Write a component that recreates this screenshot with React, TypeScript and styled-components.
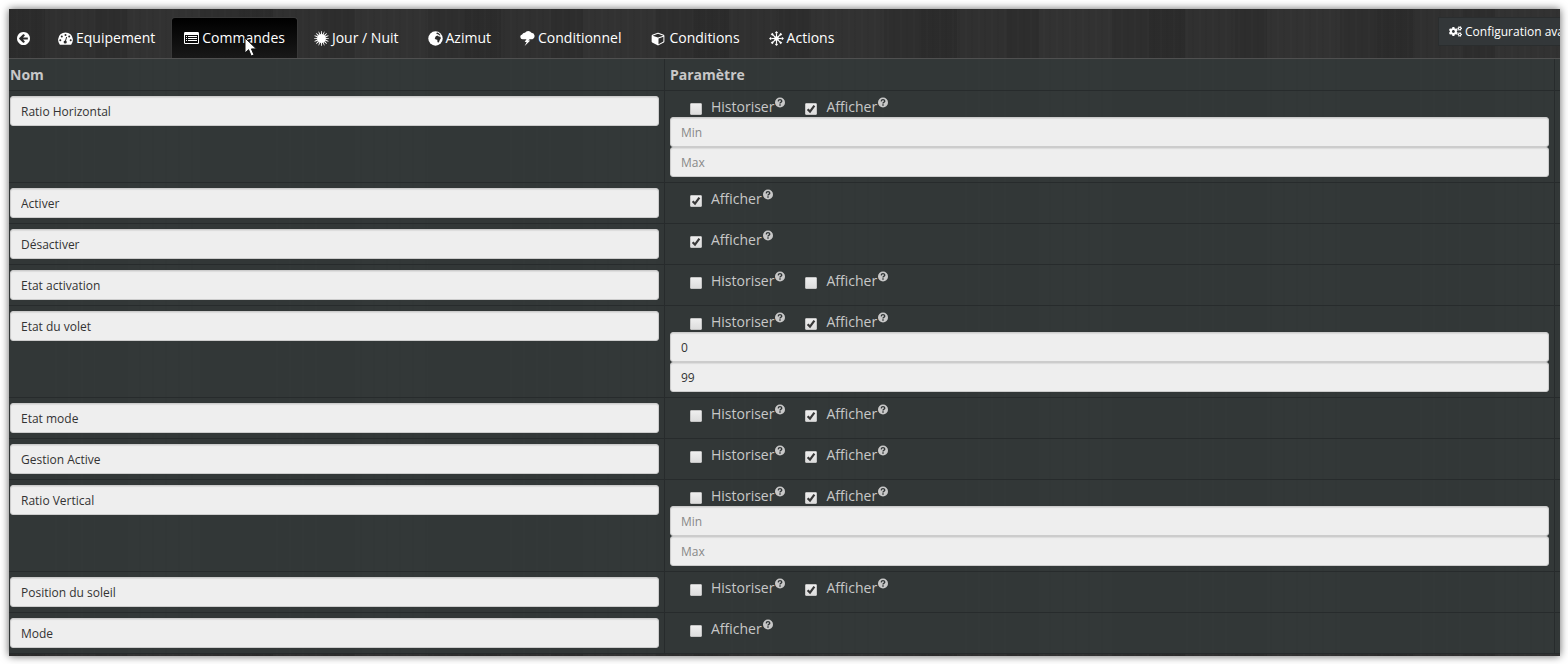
import React from "react";
import styled, { createGlobalStyle } from "styled-components";
import { FaCogs } from "react-icons/fa";

const GlobalStyle = createGlobalStyle`
  * { box-sizing: border-box; }
  body {
    margin: 0;
    background: #fff;
    font-family: "Open Sans", "Noto Sans", sans-serif;
    font-size: 14px;
    line-height: 20px;
    color: #c8c8c8;
  }
`;

const Page = styled.div`
  padding: 9px 8px 8px 9px;
`;

const Panel = styled.main`
  overflow: hidden;
  padding-bottom: 2px;
  background-color: #2e2e2e;
  background-image:
    repeating-linear-gradient(90deg, rgba(0, 0, 0, 0.03) 0 2px, transparent 2px 7px, rgba(255, 255, 255, 0.01) 7px 9px, transparent 9px 13px),
    repeating-linear-gradient(90deg, rgba(0, 0, 0, 0.06) 0 36px, rgba(255, 255, 255, 0.01) 36px 86px, rgba(0, 0, 0, 0.03) 86px 118px, rgba(255, 255, 255, 0.02) 118px 191px, transparent 191px 228px);
  box-shadow: 0 0 8px rgba(0, 0, 0, 0.6);
`;

const TopBar = styled.header`
  display: flex;
  justify-content: space-between;
  height: 50px;
  padding-top: 8px;
  border-bottom: 1px solid #505050;
`;

const Tabs = styled.nav`
  display: flex;
  gap: 3px;
  flex: none;
`;

const Tab = styled.a<{ $active?: boolean }>`
  display: flex;
  align-items: center;
  gap: 3px;
  height: 41px;
  padding: 0 12px;
  border: 1px solid ${(p) => (p.$active ? "#383838" : "transparent")};
  border-bottom: 0;
  border-radius: 4px 4px 0 0;
  background: ${(p) => (p.$active ? "linear-gradient(#000, #181818)" : "none")};
  color: #fff;
  text-decoration: none;
  white-space: nowrap;
  svg { flex: none; }
`;

const BackTab = styled(Tab)`
  padding: 0 11px 0 7px;
`;

const ConfigClip = styled.div`
  width: 122px;
  overflow: hidden;
`;

const ConfigButton = styled.button`
  display: flex;
  align-items: center;
  gap: 3px;
  height: 29px;
  margin: 0;
  padding: 0 10px;
  border: 1px solid #2a2d2e;
  background: #333739;
  color: #fff;
  font: 12px/18px "Open Sans", sans-serif;
  white-space: nowrap;
  svg { flex: none; }
`;

const CommandTable = styled.table`
  width: 100%;
  table-layout: fixed;
  border-collapse: separate;
  border-spacing: 0;
  background: rgba(51, 56, 57, 0.9);
`;

const NameCol = styled.col` width: 656px; `;
const EdgeCol = styled.col` width: 5px; `;

const HeadCell = styled.th`
  height: 32px;
  padding: 1px 5px 0;
  border-right: 1px solid #272b2c;
  border-bottom: 1px solid #272b2c;
  color: #c8c8c8;
  text-align: left;
  font-weight: 700;
  &:first-child { padding-left: 1px; }
  &:last-child { border-right: 0; }
`;

const Cell = styled.td`
  padding: 5px;
  border-right: 1px solid #272b2c;
  border-bottom: 1px solid #272b2c;
  vertical-align: top;
  &:first-child { padding-left: 1px; }
  &:last-child { border-right: 0; padding: 0; }
`;

const Field = styled.input`
  display: block;
  width: 100%;
  height: 30px;
  padding: 5px 10px;
  border: 1px solid #ccc;
  border-radius: 3px;
  background: #eee;
  box-shadow: inset 0 1px 1px rgba(0, 0, 0, 0.08);
  color: #333;
  font: 12px/18px "Open Sans", sans-serif;
  &::placeholder { color: #888; opacity: 1; }
`;

const Options = styled.div`
  display: flex;
  gap: 20px;
  height: 21px;
  padding: 1px 0 0 20px;
`;

const Option = styled.label`
  display: flex;
  align-items: flex-start;
  white-space: nowrap;
`;

const Tick = styled.input`
  appearance: none;
  flex: none;
  width: 12px;
  height: 12px;
  margin: 6px 9px 0 0;
  border: 1px solid #c4c4c4;
  border-radius: 1px;
  background: linear-gradient(#eee, #ddd);
  &:checked {
    background: url("data:image/svg+xml,%3Csvg xmlns='http://www.w3.org/2000/svg' viewBox='0 0 10 10'%3E%3Cpath d='M1.6 5.2 4 7.6 8.4 1.6' fill='none' stroke='%23383838' stroke-width='2.2'/%3E%3C/svg%3E"), linear-gradient(#eee, #ddd);
  }
`;

const HelpMark = styled.svg`
  flex: none;
`;

const Pointer = styled.svg`
  position: absolute;
  left: 244px;
  top: 37px;
  pointer-events: none;
`;

const BackIcon = () => (
  <svg width="13" height="13" viewBox="0 0 1536 1536" fill="#fff" aria-hidden="true">
    <path d="M1280 832v-128q0-26-19-45t-45-19h-502l189-189q19-19 19-45t-19-45l-91-91q-18-18-45-18t-45 18l-362 362-91 91q-18 18-18 45t18 45l91 91 362 362q18 18 45 18t45-18l91-91q18-18 18-45t-18-45l-189-189h502q26 0 45-19t19-45zM1536 768q0 209-103 385.5t-279.5 279.5-385.5 103-385.5-103-279.5-279.5-103-385.5 103-385.5 279.5-279.5 385.5-103 385.5 103 279.5 279.5 103 385.5z" />
  </svg>
);

const GaugeIcon = () => (
  <svg width="15" height="14" viewBox="0 0 15 14" aria-hidden="true">
    <path d="M1.7 13.4A7.4 7.4 0 1 1 13.3 13.4Q13 13.8 12.5 13.8H2.5Q2 13.8 1.7 13.4Z" fill="#fff" />
    <g fill="#292929">
      <circle cx="2.3" cy="9.2" r="1" />
      <circle cx="3.8" cy="5.6" r="1" />
      <circle cx="7.5" cy="4" r="1" />
      <circle cx="11.2" cy="5.6" r="1" />
      <circle cx="12.7" cy="9.2" r="1" />
      <circle cx="7.2" cy="11" r="1.6" />
    </g>
    <path d="M7.2 11 8.6 6" stroke="#292929" strokeWidth="1" />
  </svg>
);

const ListIcon = () => (
  <svg width="15" height="12" viewBox="0 0 15 12" aria-hidden="true">
    <rect width="15" height="12" rx="1.2" fill="#fff" />
    <path d="M1 3h13v8H1Z" fill="#0c0c0c" />
    <path d="M2 4.5h1M4 4.5H13M2 6.5h1M4 6.5H13M2 8.5h1M4 8.5H13" stroke="#fff" strokeWidth="1" />
  </svg>
);

const SunIcon = () => (
  <svg width="15" height="15" viewBox="-8 -8 16 16" fill="#fff" aria-hidden="true">
    <circle r="4.8" />
    {Array.from({ length: 16 }, (_, i) => (
      <path key={i} d="M-.6-4.5-.3-8H.3L.6-4.5Z" transform={`rotate(${i * 22.5})`} />
    ))}
  </svg>
);

const GlobeIcon = () => (
  <svg width="15" height="15" viewBox="0 0 16 16" aria-hidden="true">
    <circle cx="8" cy="8" r="7.7" fill="#fff" />
    <path d="M8.3 5.6 10 4.9l1.6.9 1.7.2.4 1.9-1.1 1.5-.6 1.7-1 1.3-.9-.8-.2-2.2-1.5-.3L7.2 8ZM8.7 2.2l1.6-.6 1.5 1 1.5 1.6-.6.6-1.4-.5-.5-1-1.2.2Z" fill="#292929" />
  </svg>
);

const StormIcon = () => (
  <svg width="15" height="15" viewBox="0 0 16 16" fill="#fff" aria-hidden="true">
    <path d="M2.8 8.9A2.7 2.7 0 0 1 2.3 3.6 3 3 0 0 1 5.3 1.8 4.2 4.2 0 0 1 12.2 1.9 3.5 3.5 0 0 1 13.2 8.7Z" />
    <path d="M7 8.5 5 11.6h2.1L5 16l6-5.8H8.8L10.4 8.5Z" />
  </svg>
);

const CubeIcon = () => (
  <svg width="16" height="15" viewBox="-120 -100 1900 1960" fill="#fff" aria-hidden="true">
    <path d="M896 1629l640-349v-636l-640 233v752zM832 765l698-254-698-254-698 254zM1664 512v768q0 35-18 65t-49 47l-704 384q-28 16-61 16t-61-16l-704-384q-31-17-49-47t-18-65v-768q0-40 23-73t61-47l704-256q22-8 44-8t44 8l704 256q38 14 61 47t23 73z" />
  </svg>
);

const ActionIcon = () => (
  <svg width="15" height="15" viewBox="-8 -8 16 16" fill="#fff" stroke="#fff" aria-hidden="true">
    <circle r="2" />
    {Array.from({ length: 8 }, (_, i) => (
      <g key={i} transform={`rotate(${i * 45})`}>
        <path d="M0 0V-5" strokeWidth="1.2" />
        <circle cy="-6.3" r=".9" />
      </g>
    ))}
  </svg>
);

const HelpIcon = () => (
  <HelpMark width="11" height="11" viewBox="0 0 11 11" aria-hidden="true">
    <circle cx="6" cy="5.5" r="5" fill="#c8c8c8" />
    <path d="M4.2 4.3Q4.4 2.6 6 2.6T7.8 4.1Q7.8 4.9 6.8 5.4 6 5.8 6 6.6M6 7.3V8.7" fill="none" stroke="#303536" strokeWidth="1.4" />
  </HelpMark>
);

interface Command {
  name: string;
  history?: boolean;
  shown: boolean;
  range?: [string, string];
}

const commands: Command[] = [
  { name: "Ratio Horizontal", history: true, shown: true, range: ["", ""] },
  { name: "Activer", shown: true },
  { name: "Désactiver", shown: true },
  { name: "Etat activation", history: true, shown: false },
  { name: "Etat du volet", history: true, shown: true, range: ["0", "99"] },
  { name: "Etat mode", history: true, shown: true },
  { name: "Gestion Active", history: true, shown: true },
  { name: "Ratio Vertical", history: true, shown: true, range: ["", ""] },
  { name: "Position du soleil", history: true, shown: true },
  { name: "Mode", shown: false },
];

const Choice = ({ label, checked }: { label: string; checked?: boolean }) => (
  <Option>
    <Tick type="checkbox" defaultChecked={checked} />
    {label}
    <HelpIcon />
  </Option>
);

export default function App() {
  return (
    <Page>
      <GlobalStyle />
      <Panel>
        <TopBar>
          <Tabs>
            <BackTab href="#" aria-label="Retour"><BackIcon /></BackTab>
            <Tab href="#equipement"><GaugeIcon />Equipement</Tab>
            <Tab href="#commandes" $active aria-current="page"><ListIcon />Commandes</Tab>
            <Tab href="#jour"><SunIcon />Jour / Nuit</Tab>
            <Tab href="#azimut"><GlobeIcon />Azimut</Tab>
            <Tab href="#conditionnel"><StormIcon />Conditionnel</Tab>
            <Tab href="#conditions"><CubeIcon />Conditions</Tab>
            <Tab href="#actions"><ActionIcon />Actions</Tab>
          </Tabs>
          <ConfigClip>
            <ConfigButton type="button"><FaCogs size={13} />Configuration avancée</ConfigButton>
          </ConfigClip>
        </TopBar>
        <CommandTable>
          <colgroup><NameCol /><col /><EdgeCol /></colgroup>
          <thead>
            <tr><HeadCell>Nom</HeadCell><HeadCell>Paramètre</HeadCell><HeadCell /></tr>
          </thead>
          <tbody>
            {commands.map((c) => (
              <tr key={c.name}>
                <Cell><Field aria-label="Nom" defaultValue={c.name} /></Cell>
                <Cell>
                  <Options>
                    {c.history && <Choice label="Historiser" />}
                    <Choice label="Afficher" checked={c.shown} />
                  </Options>
                  {c.range && (
                    <>
                      <Field aria-label="Min" placeholder="Min" defaultValue={c.range[0]} />
                      <Field aria-label="Max" placeholder="Max" defaultValue={c.range[1]} />
                    </>
                  )}
                </Cell>
                <Cell />
              </tr>
            ))}
          </tbody>
        </CommandTable>
      </Panel>
      <Pointer width="14" height="20" viewBox="0 0 14 20" aria-hidden="true">
        <path d="M1 1v15l3.6-3.3L7.2 19l2.8-1.2-2.6-5.9h5Z" fill="#fff" stroke="#111" />
      </Pointer>
    </Page>
  );
}
